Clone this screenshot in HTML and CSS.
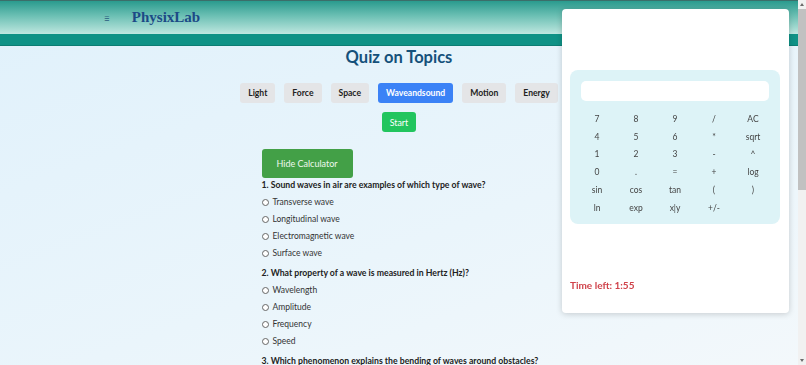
FILE: index.html
```html
<!DOCTYPE html>
<html lang="en">
<head>
<meta charset="utf-8">
<title>PhysixLab Quiz</title>
<link rel="stylesheet" href="styles.css">
</head>
<body>
<div class="window">
<div class="page">
<header class="topbar">
  <span class="burger">&#8801;</span>
  <span class="brand">PhysixLab</span>
</header>
<div class="stripe"></div>
<main class="main">
  <h2 class="title">Quiz on Topics</h2>
  <div class="topics">
    <button class="topic">Light</button>
    <button class="topic">Force</button>
    <button class="topic">Space</button>
    <button class="topic active">Waveandsound</button>
    <button class="topic">Motion</button>
    <button class="topic">Energy</button>
  </div>
  <div class="start-row"><button class="start">Start</button></div>
  <section class="quiz">
    <button class="hide-calc">Hide Calculator</button>
    <div class="question">
      <div class="q-title">1. Sound waves in air are examples of which type of wave?</div>
      <label class="option"><span class="radio"></span>Transverse wave</label>
      <label class="option"><span class="radio"></span>Longitudinal wave</label>
      <label class="option"><span class="radio"></span>Electromagnetic wave</label>
      <label class="option"><span class="radio"></span>Surface wave</label>
    </div>
    <div class="question">
      <div class="q-title">2. What property of a wave is measured in Hertz (Hz)?</div>
      <label class="option"><span class="radio"></span>Wavelength</label>
      <label class="option"><span class="radio"></span>Amplitude</label>
      <label class="option"><span class="radio"></span>Frequency</label>
      <label class="option"><span class="radio"></span>Speed</label>
    </div>
    <div class="question">
      <div class="q-title">3. Which phenomenon explains the bending of waves around obstacles?</div>
    </div>
  </section>
</main>
</div>
<div class="scrollbar">
  <span class="sb-btn"><span class="arrow-up"></span></span>
  <span class="sb-thumb"></span>
  <span class="sb-track"></span>
  <span class="sb-btn"><span class="arrow-down"></span></span>
</div>
</div>

<aside class="calc-panel">
  <div class="calc">
    <div class="display"></div>
    <div class="keys">
      <span>7</span><span>8</span><span>9</span><span>/</span><span>AC</span>
      <span>4</span><span>5</span><span>6</span><span>*</span><span>sqrt</span>
      <span>1</span><span>2</span><span>3</span><span>-</span><span>^</span>
      <span>0</span><span>.</span><span>=</span><span>+</span><span>log</span>
      <span>sin</span><span>cos</span><span>tan</span><span>(</span><span>)</span>
      <span>ln</span><span>exp</span><span>x|y</span><span>+/-</span><span></span>
    </div>
  </div>
  <div class="timer">Time left: 1:55</div>
</aside>
</body>
</html>
```

FILE: styles.css
```css
html, body {
  height: 100%;
  margin: 0;
  overflow: hidden;
}
body {
  font-family: Lato, "Open Sans", sans-serif;
  color: #222;
}
.window {
  display: flex;
  height: 100vh;
}
.page {
  flex: 1;
  overflow: hidden;
  background: linear-gradient(160deg, #e0f1fb 0%, #eaf5fb 60%, #f3f8fb 100%);
}
.scrollbar {
  width: 8px;
  display: flex;
  flex-direction: column;
  background: #f1f1f1;
}
.sb-btn {
  height: 9px;
  display: flex;
  align-items: center;
  justify-content: center;
}
.sb-thumb {
  height: 181px;
  background: #c1c1c1;
}
.sb-track {
  flex: 1;
}
.arrow-up {
  border-left: 2.5px solid transparent;
  border-right: 2.5px solid transparent;
  border-bottom: 3px solid #6b6b6b;
}
.arrow-down {
  border-left: 2.5px solid transparent;
  border-right: 2.5px solid transparent;
  border-top: 3px solid #6b6b6b;
}

.topbar {
  height: 34px;
  display: flex;
  align-items: center;
  padding-left: 104px;
  gap: 22px;
  background: linear-gradient(180deg, #2a9b8e 0%, #6cc0b4 45%, #bfe7e0 100%);
  border-top: 1px solid #3b6e6a;
  box-sizing: border-box;
}
.burger {
  font-size: 10px;
  color: #2b5b80;
}
.brand {
  font-family: "Liberation Serif", "DejaVu Serif", serif;
  font-weight: bold;
  font-size: 15px;
  color: #1c4a86;
}
.stripe {
  height: 12px;
  background: #0f9286;
  border-bottom: 1px solid #0c7d73;
  box-sizing: border-box;
}
.title {
  margin: 0;
  text-align: center;
  font-size: 16.5px;
  line-height: 22px;
  font-weight: 700;
  color: #14507a;
}
.topics {
  display: flex;
  justify-content: center;
  gap: 9px;
  margin-top: 15px;
}
.topic {
  height: 20px;
  padding: 0 8px;
  border: none;
  border-radius: 3px;
  background: #e4e5e7;
  color: #222;
  font-family: inherit;
  font-weight: 700;
  font-size: 8.6px;
}
.topic.active {
  background: #3b82f6;
  color: #fff;
}
.start-row {
  display: flex;
  justify-content: center;
  margin-top: 9px;
}
.start {
  height: 20px;
  padding: 0 8px;
  border: none;
  border-radius: 3px;
  background: #22c55e;
  color: #fff;
  font-family: inherit;
  font-size: 8.8px;
}
.quiz {
  width: 275px;
  margin: 17px auto 0;
  white-space: nowrap;
}
.hide-calc {
  display: block;
  width: 91px;
  height: 29px;
  border: none;
  border-radius: 3px;
  background: #43a047;
  color: #eef8ee;
  font-family: inherit;
  font-size: 9px;
}
.question {
  margin-bottom: 4.5px;
}
.q-title {
  height: 14px;
  line-height: 14px;
  font-size: 8.7px;
  font-weight: 700;
  margin-bottom: 1.5px;
}
.option {
  display: flex;
  align-items: center;
  height: 17px;
  font-size: 8.5px;
  color: #333;
}
.radio {
  width: 5px;
  height: 5px;
  border: 1px solid #666;
  border-radius: 50%;
  background: #fff;
  margin: 0 4px 0 0;
}

.calc-panel {
  position: fixed;
  top: 9px;
  right: 17px;
  width: 227px;
  height: 304px;
  box-sizing: border-box;
  padding: 61px 9px 0 8px;
  background: #fff;
  border-radius: 4px;
  box-shadow: 0 1px 6px rgba(0, 0, 0, 0.18);
}
.calc {
  background: #ddf3f7;
  border-radius: 8px;
  padding: 11px 0 0;
  height: 154px;
  box-sizing: border-box;
  display: flex;
  flex-direction: column;
  align-items: center;
}
.display {
  width: 188px;
  height: 20px;
  background: #fff;
  border-radius: 5px;
}
.keys {
  margin-top: 9px;
  width: 195px;
  display: grid;
  grid-template-columns: repeat(5, 1fr);
  grid-auto-rows: 17.8px;
  align-items: center;
  text-align: center;
  font-size: 8.5px;
  color: #444;
}
.timer {
  margin-top: 55px;
  font-size: 10px;
  font-weight: 700;
  color: #d0434b;
}
```
